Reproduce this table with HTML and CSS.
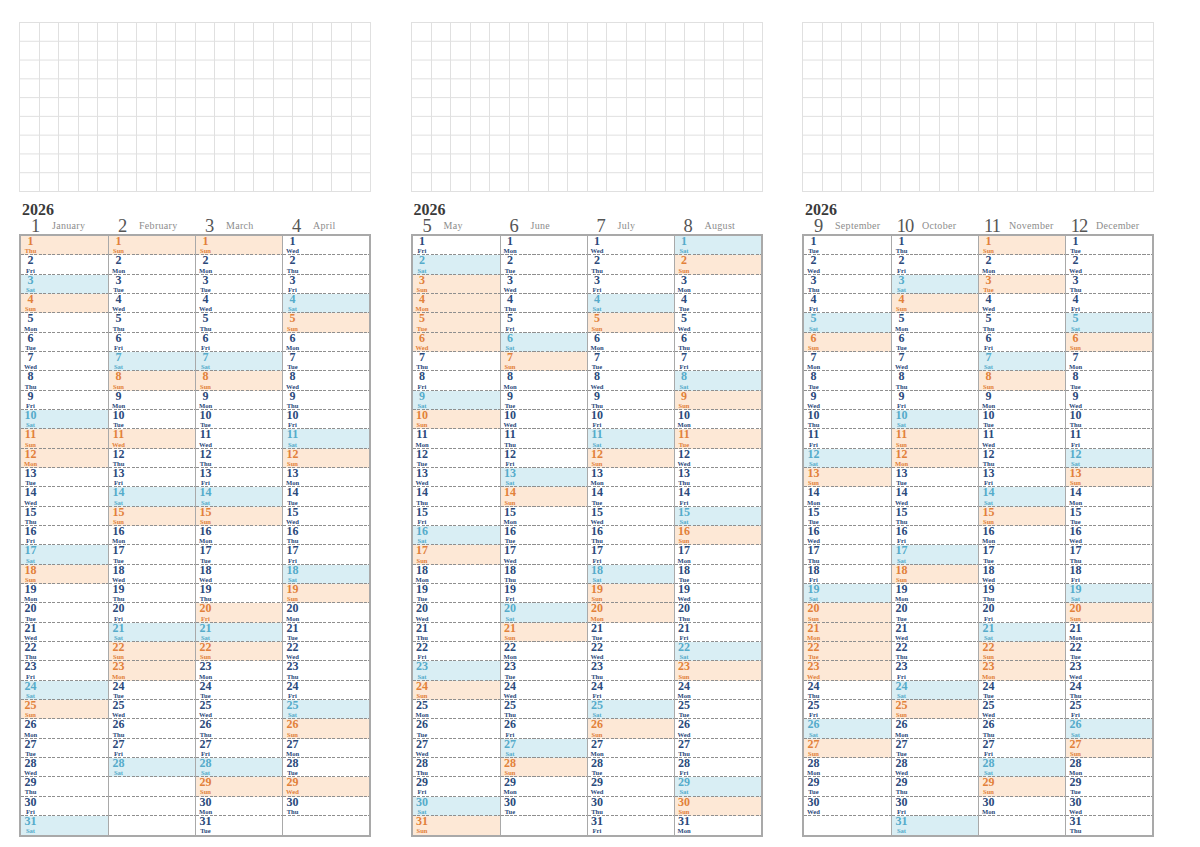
FILE: index.html
```html
<!DOCTYPE html>
<html lang="en">
<head>
<meta charset="utf-8">
<title>2026 Calendar</title>
<link rel="stylesheet" href="styles.css">
</head>
<body>
<main class="page">

<section class="panel">
  <div class="memo"></div>
  <div class="year">2026</div>
  <div class="months">
    <div class="mh"><span class="mn">1</span><span class="mname">January</span></div>
    <div class="mh"><span class="mn">2</span><span class="mname">February</span></div>
    <div class="mh"><span class="mn">3</span><span class="mname">March</span></div>
    <div class="mh"><span class="mn">4</span><span class="mname">April</span></div>
  </div>
  <div class="cal">
    <div class="col">
      <div class="d h"><b>1</b><i>Thu</i></div><div class="d"><b>2</b><i>Fri</i></div><div class="d s"><b>3</b><i>Sat</i></div><div class="d h"><b>4</b><i>Sun</i></div><div class="d"><b>5</b><i>Mon</i></div><div class="d"><b>6</b><i>Tue</i></div><div class="d"><b>7</b><i>Wed</i></div><div class="d"><b>8</b><i>Thu</i></div><div class="d"><b>9</b><i>Fri</i></div><div class="d s"><b>10</b><i>Sat</i></div><div class="d h"><b>11</b><i>Sun</i></div><div class="d h"><b>12</b><i>Mon</i></div><div class="d"><b>13</b><i>Tue</i></div><div class="d"><b>14</b><i>Wed</i></div><div class="d"><b>15</b><i>Thu</i></div><div class="d"><b>16</b><i>Fri</i></div><div class="d s"><b>17</b><i>Sat</i></div><div class="d h"><b>18</b><i>Sun</i></div><div class="d"><b>19</b><i>Mon</i></div><div class="d"><b>20</b><i>Tue</i></div><div class="d"><b>21</b><i>Wed</i></div><div class="d"><b>22</b><i>Thu</i></div><div class="d"><b>23</b><i>Fri</i></div><div class="d s"><b>24</b><i>Sat</i></div><div class="d h"><b>25</b><i>Sun</i></div><div class="d"><b>26</b><i>Mon</i></div><div class="d"><b>27</b><i>Tue</i></div><div class="d"><b>28</b><i>Wed</i></div><div class="d"><b>29</b><i>Thu</i></div><div class="d"><b>30</b><i>Fri</i></div><div class="d s"><b>31</b><i>Sat</i></div>
    </div>
    <div class="col">
      <div class="d h"><b>1</b><i>Sun</i></div><div class="d"><b>2</b><i>Mon</i></div><div class="d"><b>3</b><i>Tue</i></div><div class="d"><b>4</b><i>Wed</i></div><div class="d"><b>5</b><i>Thu</i></div><div class="d"><b>6</b><i>Fri</i></div><div class="d s"><b>7</b><i>Sat</i></div><div class="d h"><b>8</b><i>Sun</i></div><div class="d"><b>9</b><i>Mon</i></div><div class="d"><b>10</b><i>Tue</i></div><div class="d h"><b>11</b><i>Wed</i></div><div class="d"><b>12</b><i>Thu</i></div><div class="d"><b>13</b><i>Fri</i></div><div class="d s"><b>14</b><i>Sat</i></div><div class="d h"><b>15</b><i>Sun</i></div><div class="d"><b>16</b><i>Mon</i></div><div class="d"><b>17</b><i>Tue</i></div><div class="d"><b>18</b><i>Wed</i></div><div class="d"><b>19</b><i>Thu</i></div><div class="d"><b>20</b><i>Fri</i></div><div class="d s"><b>21</b><i>Sat</i></div><div class="d h"><b>22</b><i>Sun</i></div><div class="d h"><b>23</b><i>Mon</i></div><div class="d"><b>24</b><i>Tue</i></div><div class="d"><b>25</b><i>Wed</i></div><div class="d"><b>26</b><i>Thu</i></div><div class="d"><b>27</b><i>Fri</i></div><div class="d s"><b>28</b><i>Sat</i></div><div class="d"></div><div class="d"></div><div class="d"></div>
    </div>
    <div class="col">
      <div class="d h"><b>1</b><i>Sun</i></div><div class="d"><b>2</b><i>Mon</i></div><div class="d"><b>3</b><i>Tue</i></div><div class="d"><b>4</b><i>Wed</i></div><div class="d"><b>5</b><i>Thu</i></div><div class="d"><b>6</b><i>Fri</i></div><div class="d s"><b>7</b><i>Sat</i></div><div class="d h"><b>8</b><i>Sun</i></div><div class="d"><b>9</b><i>Mon</i></div><div class="d"><b>10</b><i>Tue</i></div><div class="d"><b>11</b><i>Wed</i></div><div class="d"><b>12</b><i>Thu</i></div><div class="d"><b>13</b><i>Fri</i></div><div class="d s"><b>14</b><i>Sat</i></div><div class="d h"><b>15</b><i>Sun</i></div><div class="d"><b>16</b><i>Mon</i></div><div class="d"><b>17</b><i>Tue</i></div><div class="d"><b>18</b><i>Wed</i></div><div class="d"><b>19</b><i>Thu</i></div><div class="d h"><b>20</b><i>Fri</i></div><div class="d s"><b>21</b><i>Sat</i></div><div class="d h"><b>22</b><i>Sun</i></div><div class="d"><b>23</b><i>Mon</i></div><div class="d"><b>24</b><i>Tue</i></div><div class="d"><b>25</b><i>Wed</i></div><div class="d"><b>26</b><i>Thu</i></div><div class="d"><b>27</b><i>Fri</i></div><div class="d s"><b>28</b><i>Sat</i></div><div class="d h"><b>29</b><i>Sun</i></div><div class="d"><b>30</b><i>Mon</i></div><div class="d"><b>31</b><i>Tue</i></div>
    </div>
    <div class="col">
      <div class="d"><b>1</b><i>Wed</i></div><div class="d"><b>2</b><i>Thu</i></div><div class="d"><b>3</b><i>Fri</i></div><div class="d s"><b>4</b><i>Sat</i></div><div class="d h"><b>5</b><i>Sun</i></div><div class="d"><b>6</b><i>Mon</i></div><div class="d"><b>7</b><i>Tue</i></div><div class="d"><b>8</b><i>Wed</i></div><div class="d"><b>9</b><i>Thu</i></div><div class="d"><b>10</b><i>Fri</i></div><div class="d s"><b>11</b><i>Sat</i></div><div class="d h"><b>12</b><i>Sun</i></div><div class="d"><b>13</b><i>Mon</i></div><div class="d"><b>14</b><i>Tue</i></div><div class="d"><b>15</b><i>Wed</i></div><div class="d"><b>16</b><i>Thu</i></div><div class="d"><b>17</b><i>Fri</i></div><div class="d s"><b>18</b><i>Sat</i></div><div class="d h"><b>19</b><i>Sun</i></div><div class="d"><b>20</b><i>Mon</i></div><div class="d"><b>21</b><i>Tue</i></div><div class="d"><b>22</b><i>Wed</i></div><div class="d"><b>23</b><i>Thu</i></div><div class="d"><b>24</b><i>Fri</i></div><div class="d s"><b>25</b><i>Sat</i></div><div class="d h"><b>26</b><i>Sun</i></div><div class="d"><b>27</b><i>Mon</i></div><div class="d"><b>28</b><i>Tue</i></div><div class="d h"><b>29</b><i>Wed</i></div><div class="d"><b>30</b><i>Thu</i></div><div class="d"></div>
    </div>
  </div>
</section>

<section class="panel">
  <div class="memo"></div>
  <div class="year">2026</div>
  <div class="months">
    <div class="mh"><span class="mn">5</span><span class="mname">May</span></div>
    <div class="mh"><span class="mn">6</span><span class="mname">June</span></div>
    <div class="mh"><span class="mn">7</span><span class="mname">July</span></div>
    <div class="mh"><span class="mn">8</span><span class="mname">August</span></div>
  </div>
  <div class="cal">
    <div class="col">
      <div class="d"><b>1</b><i>Fri</i></div><div class="d s"><b>2</b><i>Sat</i></div><div class="d h"><b>3</b><i>Sun</i></div><div class="d h"><b>4</b><i>Mon</i></div><div class="d h"><b>5</b><i>Tue</i></div><div class="d h"><b>6</b><i>Wed</i></div><div class="d"><b>7</b><i>Thu</i></div><div class="d"><b>8</b><i>Fri</i></div><div class="d s"><b>9</b><i>Sat</i></div><div class="d h"><b>10</b><i>Sun</i></div><div class="d"><b>11</b><i>Mon</i></div><div class="d"><b>12</b><i>Tue</i></div><div class="d"><b>13</b><i>Wed</i></div><div class="d"><b>14</b><i>Thu</i></div><div class="d"><b>15</b><i>Fri</i></div><div class="d s"><b>16</b><i>Sat</i></div><div class="d h"><b>17</b><i>Sun</i></div><div class="d"><b>18</b><i>Mon</i></div><div class="d"><b>19</b><i>Tue</i></div><div class="d"><b>20</b><i>Wed</i></div><div class="d"><b>21</b><i>Thu</i></div><div class="d"><b>22</b><i>Fri</i></div><div class="d s"><b>23</b><i>Sat</i></div><div class="d h"><b>24</b><i>Sun</i></div><div class="d"><b>25</b><i>Mon</i></div><div class="d"><b>26</b><i>Tue</i></div><div class="d"><b>27</b><i>Wed</i></div><div class="d"><b>28</b><i>Thu</i></div><div class="d"><b>29</b><i>Fri</i></div><div class="d s"><b>30</b><i>Sat</i></div><div class="d h"><b>31</b><i>Sun</i></div>
    </div>
    <div class="col">
      <div class="d"><b>1</b><i>Mon</i></div><div class="d"><b>2</b><i>Tue</i></div><div class="d"><b>3</b><i>Wed</i></div><div class="d"><b>4</b><i>Thu</i></div><div class="d"><b>5</b><i>Fri</i></div><div class="d s"><b>6</b><i>Sat</i></div><div class="d h"><b>7</b><i>Sun</i></div><div class="d"><b>8</b><i>Mon</i></div><div class="d"><b>9</b><i>Tue</i></div><div class="d"><b>10</b><i>Wed</i></div><div class="d"><b>11</b><i>Thu</i></div><div class="d"><b>12</b><i>Fri</i></div><div class="d s"><b>13</b><i>Sat</i></div><div class="d h"><b>14</b><i>Sun</i></div><div class="d"><b>15</b><i>Mon</i></div><div class="d"><b>16</b><i>Tue</i></div><div class="d"><b>17</b><i>Wed</i></div><div class="d"><b>18</b><i>Thu</i></div><div class="d"><b>19</b><i>Fri</i></div><div class="d s"><b>20</b><i>Sat</i></div><div class="d h"><b>21</b><i>Sun</i></div><div class="d"><b>22</b><i>Mon</i></div><div class="d"><b>23</b><i>Tue</i></div><div class="d"><b>24</b><i>Wed</i></div><div class="d"><b>25</b><i>Thu</i></div><div class="d"><b>26</b><i>Fri</i></div><div class="d s"><b>27</b><i>Sat</i></div><div class="d h"><b>28</b><i>Sun</i></div><div class="d"><b>29</b><i>Mon</i></div><div class="d"><b>30</b><i>Tue</i></div><div class="d"></div>
    </div>
    <div class="col">
      <div class="d"><b>1</b><i>Wed</i></div><div class="d"><b>2</b><i>Thu</i></div><div class="d"><b>3</b><i>Fri</i></div><div class="d s"><b>4</b><i>Sat</i></div><div class="d h"><b>5</b><i>Sun</i></div><div class="d"><b>6</b><i>Mon</i></div><div class="d"><b>7</b><i>Tue</i></div><div class="d"><b>8</b><i>Wed</i></div><div class="d"><b>9</b><i>Thu</i></div><div class="d"><b>10</b><i>Fri</i></div><div class="d s"><b>11</b><i>Sat</i></div><div class="d h"><b>12</b><i>Sun</i></div><div class="d"><b>13</b><i>Mon</i></div><div class="d"><b>14</b><i>Tue</i></div><div class="d"><b>15</b><i>Wed</i></div><div class="d"><b>16</b><i>Thu</i></div><div class="d"><b>17</b><i>Fri</i></div><div class="d s"><b>18</b><i>Sat</i></div><div class="d h"><b>19</b><i>Sun</i></div><div class="d h"><b>20</b><i>Mon</i></div><div class="d"><b>21</b><i>Tue</i></div><div class="d"><b>22</b><i>Wed</i></div><div class="d"><b>23</b><i>Thu</i></div><div class="d"><b>24</b><i>Fri</i></div><div class="d s"><b>25</b><i>Sat</i></div><div class="d h"><b>26</b><i>Sun</i></div><div class="d"><b>27</b><i>Mon</i></div><div class="d"><b>28</b><i>Tue</i></div><div class="d"><b>29</b><i>Wed</i></div><div class="d"><b>30</b><i>Thu</i></div><div class="d"><b>31</b><i>Fri</i></div>
    </div>
    <div class="col">
      <div class="d s"><b>1</b><i>Sat</i></div><div class="d h"><b>2</b><i>Sun</i></div><div class="d"><b>3</b><i>Mon</i></div><div class="d"><b>4</b><i>Tue</i></div><div class="d"><b>5</b><i>Wed</i></div><div class="d"><b>6</b><i>Thu</i></div><div class="d"><b>7</b><i>Fri</i></div><div class="d s"><b>8</b><i>Sat</i></div><div class="d h"><b>9</b><i>Sun</i></div><div class="d"><b>10</b><i>Mon</i></div><div class="d h"><b>11</b><i>Tue</i></div><div class="d"><b>12</b><i>Wed</i></div><div class="d"><b>13</b><i>Thu</i></div><div class="d"><b>14</b><i>Fri</i></div><div class="d s"><b>15</b><i>Sat</i></div><div class="d h"><b>16</b><i>Sun</i></div><div class="d"><b>17</b><i>Mon</i></div><div class="d"><b>18</b><i>Tue</i></div><div class="d"><b>19</b><i>Wed</i></div><div class="d"><b>20</b><i>Thu</i></div><div class="d"><b>21</b><i>Fri</i></div><div class="d s"><b>22</b><i>Sat</i></div><div class="d h"><b>23</b><i>Sun</i></div><div class="d"><b>24</b><i>Mon</i></div><div class="d"><b>25</b><i>Tue</i></div><div class="d"><b>26</b><i>Wed</i></div><div class="d"><b>27</b><i>Thu</i></div><div class="d"><b>28</b><i>Fri</i></div><div class="d s"><b>29</b><i>Sat</i></div><div class="d h"><b>30</b><i>Sun</i></div><div class="d"><b>31</b><i>Mon</i></div>
    </div>
  </div>
</section>

<section class="panel">
  <div class="memo"></div>
  <div class="year">2026</div>
  <div class="months">
    <div class="mh"><span class="mn">9</span><span class="mname">September</span></div>
    <div class="mh"><span class="mn">10</span><span class="mname">October</span></div>
    <div class="mh"><span class="mn">11</span><span class="mname">November</span></div>
    <div class="mh"><span class="mn">12</span><span class="mname">December</span></div>
  </div>
  <div class="cal">
    <div class="col">
      <div class="d"><b>1</b><i>Tue</i></div><div class="d"><b>2</b><i>Wed</i></div><div class="d"><b>3</b><i>Thu</i></div><div class="d"><b>4</b><i>Fri</i></div><div class="d s"><b>5</b><i>Sat</i></div><div class="d h"><b>6</b><i>Sun</i></div><div class="d"><b>7</b><i>Mon</i></div><div class="d"><b>8</b><i>Tue</i></div><div class="d"><b>9</b><i>Wed</i></div><div class="d"><b>10</b><i>Thu</i></div><div class="d"><b>11</b><i>Fri</i></div><div class="d s"><b>12</b><i>Sat</i></div><div class="d h"><b>13</b><i>Sun</i></div><div class="d"><b>14</b><i>Mon</i></div><div class="d"><b>15</b><i>Tue</i></div><div class="d"><b>16</b><i>Wed</i></div><div class="d"><b>17</b><i>Thu</i></div><div class="d"><b>18</b><i>Fri</i></div><div class="d s"><b>19</b><i>Sat</i></div><div class="d h"><b>20</b><i>Sun</i></div><div class="d h"><b>21</b><i>Mon</i></div><div class="d h"><b>22</b><i>Tue</i></div><div class="d h"><b>23</b><i>Wed</i></div><div class="d"><b>24</b><i>Thu</i></div><div class="d"><b>25</b><i>Fri</i></div><div class="d s"><b>26</b><i>Sat</i></div><div class="d h"><b>27</b><i>Sun</i></div><div class="d"><b>28</b><i>Mon</i></div><div class="d"><b>29</b><i>Tue</i></div><div class="d"><b>30</b><i>Wed</i></div><div class="d"></div>
    </div>
    <div class="col">
      <div class="d"><b>1</b><i>Thu</i></div><div class="d"><b>2</b><i>Fri</i></div><div class="d s"><b>3</b><i>Sat</i></div><div class="d h"><b>4</b><i>Sun</i></div><div class="d"><b>5</b><i>Mon</i></div><div class="d"><b>6</b><i>Tue</i></div><div class="d"><b>7</b><i>Wed</i></div><div class="d"><b>8</b><i>Thu</i></div><div class="d"><b>9</b><i>Fri</i></div><div class="d s"><b>10</b><i>Sat</i></div><div class="d h"><b>11</b><i>Sun</i></div><div class="d h"><b>12</b><i>Mon</i></div><div class="d"><b>13</b><i>Tue</i></div><div class="d"><b>14</b><i>Wed</i></div><div class="d"><b>15</b><i>Thu</i></div><div class="d"><b>16</b><i>Fri</i></div><div class="d s"><b>17</b><i>Sat</i></div><div class="d h"><b>18</b><i>Sun</i></div><div class="d"><b>19</b><i>Mon</i></div><div class="d"><b>20</b><i>Tue</i></div><div class="d"><b>21</b><i>Wed</i></div><div class="d"><b>22</b><i>Thu</i></div><div class="d"><b>23</b><i>Fri</i></div><div class="d s"><b>24</b><i>Sat</i></div><div class="d h"><b>25</b><i>Sun</i></div><div class="d"><b>26</b><i>Mon</i></div><div class="d"><b>27</b><i>Tue</i></div><div class="d"><b>28</b><i>Wed</i></div><div class="d"><b>29</b><i>Thu</i></div><div class="d"><b>30</b><i>Fri</i></div><div class="d s"><b>31</b><i>Sat</i></div>
    </div>
    <div class="col">
      <div class="d h"><b>1</b><i>Sun</i></div><div class="d"><b>2</b><i>Mon</i></div><div class="d h"><b>3</b><i>Tue</i></div><div class="d"><b>4</b><i>Wed</i></div><div class="d"><b>5</b><i>Thu</i></div><div class="d"><b>6</b><i>Fri</i></div><div class="d s"><b>7</b><i>Sat</i></div><div class="d h"><b>8</b><i>Sun</i></div><div class="d"><b>9</b><i>Mon</i></div><div class="d"><b>10</b><i>Tue</i></div><div class="d"><b>11</b><i>Wed</i></div><div class="d"><b>12</b><i>Thu</i></div><div class="d"><b>13</b><i>Fri</i></div><div class="d s"><b>14</b><i>Sat</i></div><div class="d h"><b>15</b><i>Sun</i></div><div class="d"><b>16</b><i>Mon</i></div><div class="d"><b>17</b><i>Tue</i></div><div class="d"><b>18</b><i>Wed</i></div><div class="d"><b>19</b><i>Thu</i></div><div class="d"><b>20</b><i>Fri</i></div><div class="d s"><b>21</b><i>Sat</i></div><div class="d h"><b>22</b><i>Sun</i></div><div class="d h"><b>23</b><i>Mon</i></div><div class="d"><b>24</b><i>Tue</i></div><div class="d"><b>25</b><i>Wed</i></div><div class="d"><b>26</b><i>Thu</i></div><div class="d"><b>27</b><i>Fri</i></div><div class="d s"><b>28</b><i>Sat</i></div><div class="d h"><b>29</b><i>Sun</i></div><div class="d"><b>30</b><i>Mon</i></div><div class="d"></div>
    </div>
    <div class="col">
      <div class="d"><b>1</b><i>Tue</i></div><div class="d"><b>2</b><i>Wed</i></div><div class="d"><b>3</b><i>Thu</i></div><div class="d"><b>4</b><i>Fri</i></div><div class="d s"><b>5</b><i>Sat</i></div><div class="d h"><b>6</b><i>Sun</i></div><div class="d"><b>7</b><i>Mon</i></div><div class="d"><b>8</b><i>Tue</i></div><div class="d"><b>9</b><i>Wed</i></div><div class="d"><b>10</b><i>Thu</i></div><div class="d"><b>11</b><i>Fri</i></div><div class="d s"><b>12</b><i>Sat</i></div><div class="d h"><b>13</b><i>Sun</i></div><div class="d"><b>14</b><i>Mon</i></div><div class="d"><b>15</b><i>Tue</i></div><div class="d"><b>16</b><i>Wed</i></div><div class="d"><b>17</b><i>Thu</i></div><div class="d"><b>18</b><i>Fri</i></div><div class="d s"><b>19</b><i>Sat</i></div><div class="d h"><b>20</b><i>Sun</i></div><div class="d"><b>21</b><i>Mon</i></div><div class="d"><b>22</b><i>Tue</i></div><div class="d"><b>23</b><i>Wed</i></div><div class="d"><b>24</b><i>Thu</i></div><div class="d"><b>25</b><i>Fri</i></div><div class="d s"><b>26</b><i>Sat</i></div><div class="d h"><b>27</b><i>Sun</i></div><div class="d"><b>28</b><i>Mon</i></div><div class="d"><b>29</b><i>Tue</i></div><div class="d"><b>30</b><i>Wed</i></div><div class="d"><b>31</b><i>Thu</i></div>
    </div>
  </div>
</section>

</main>
</body>
</html>
```
FILE: styles.css
```css
* { box-sizing: border-box; }

html, body {
  margin: 0;
  padding: 0;
  background: #ffffff;
}

body {
  font-family: "Liberation Serif", "Times New Roman", serif;
}

.page {
  display: flex;
  gap: 39.5px;
  padding: 22px 0 0 19px;
}

.panel {
  width: 352px;
  flex: none;
  display: flex;
  flex-direction: column;
}

/* memo grid: 18 x 9 squares */
.memo {
  height: 170px;
  border-right: 1px solid #e0e0e0;
  border-bottom: 1px solid #e0e0e0;
  background-image:
    linear-gradient(to right, #e0e0e0 0 1px, transparent 1px 20px, #e0e0e0 20px 21px, transparent 21px),
    linear-gradient(to bottom, #e0e0e0 0 1px, transparent 1px 19px, #e0e0e0 19px 20px, transparent 20px 38px, #e0e0e0 38px 39px, transparent 39px);
  background-size: 39px 100%, 100% 56.33px;
  background-repeat: repeat-x, repeat-y;
}

/* header */
.year {
  margin-top: 11px;
  height: 15px;
  line-height: 14px;
  padding-left: 3px;
  font-size: 16px;
  font-weight: bold;
  color: #3a3a3a;
}

.months {
  display: grid;
  grid-template-columns: repeat(4, 1fr);
  padding: 0 2px;
  height: 16px;
}

.mh {
  display: flex;
  align-items: flex-end;
}

.mn {
  width: 28px;
  text-align: center;
  font-size: 18.5px;
  line-height: 15px;
  letter-spacing: -1px;
  color: #555555;
}

.mname {
  margin-left: 3px;
  padding-bottom: 3px;
  font-size: 10px;
  line-height: 10px;
  letter-spacing: 0.3px;
  color: #8c8c8c;
}

/* calendar table */
.cal {
  height: 603px;
  border: 2px solid #a9a9a9;
  display: grid;
  grid-template-columns: repeat(4, 1fr);
}

.col {
  display: flex;
  flex-direction: column;
  min-width: 0;
}

.col + .col {
  border-left: 1.5px solid #a9a9a9;
}

.d {
  flex: 1 1 0;
  min-height: 0;
  display: flex;
  flex-direction: column;
  align-items: flex-start;
  color: #2b4a7b;
  background-image: repeating-linear-gradient(to right, #8f8f8f 0 3px, transparent 3px 4.5px);
  background-size: 100% 1px;
  background-position: left bottom;
  background-repeat: no-repeat;
}

.d:last-child {
  background-image: none;
}

.d b,
.d i {
  display: block;
  width: 15px;
  margin-left: 2px;
  text-align: center;
  white-space: nowrap;
  font-style: normal;
  font-weight: bold;
}

.d b {
  font-size: 12px;
  line-height: 10px;
}

.d i {
  margin-top: 1.3px;
  font-size: 6.6px;
  line-height: 8px;
}

.d.h {
  background-color: #fde8d6;
  color: #e2813a;
}

.d.s {
  background-color: #d9eef4;
  color: #55abca;
}
```
